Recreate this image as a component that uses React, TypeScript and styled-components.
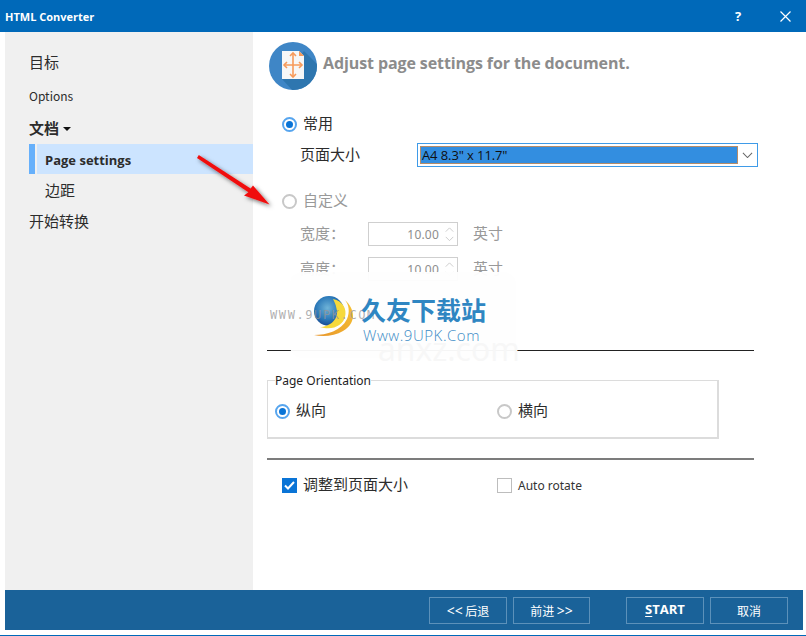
import styled, { createGlobalStyle } from 'styled-components';

const GlobalStyle = createGlobalStyle`
  html, body {
    margin: 0;
    padding: 0;
    background: #fff;
  }
  body {
    font-family: "Noto Sans", "Noto Sans CJK SC", sans-serif;
    color: #2c2c2c;
  }
`;

const cjk = `"Noto Sans CJK SC", "Noto Sans", sans-serif`;

const Window = styled.div`
  position: relative;
  width: 806px;
  height: 636px;
  display: flex;
  flex-direction: column;
  overflow: hidden;
  background: #fff;
  border-bottom: 1px solid #0069b9;
  box-sizing: border-box;
`;

const TitleBar = styled.div`
  height: 32px;
  flex: none;
  display: flex;
  align-items: center;
  padding: 0 15px 0 5px;
  background: #0069b9;
  color: #fff;
`;

const AppName = styled.div`
  flex: 1;
  font: 700 11px "Open Sans", sans-serif;
`;

const HelpMark = styled.div`
  width: 8px;
  margin-right: 37px;
  font: 700 13px "Open Sans", sans-serif;
`;

const Body = styled.div`
  flex: 1;
  display: flex;
  padding-left: 5px;
  min-height: 0;
`;

const Sidebar = styled.nav`
  width: 248px;
  flex: none;
  padding-top: 18px;
  box-sizing: border-box;
  background: #f0f0f0;
  display: flex;
  flex-direction: column;
`;

const NavItem = styled.div<{ $h: number; $bold?: boolean; $small?: boolean; $after?: number }>`
  height: ${p => p.$h}px;
  margin-bottom: ${p => p.$after ?? 0}px;
  display: flex;
  align-items: center;
  padding-left: 24px;
  font-family: ${cjk};
  font-size: ${p => (p.$small ? 12 : 15)}px;
  font-weight: ${p => (p.$bold ? 700 : 400)};
  color: #2c2c2c;
`;

const Caret = styled.span`
  width: 0;
  height: 0;
  margin: 3px 0 0 4px;
  border: 4px solid transparent;
  border-top: 4px solid #111;
  border-bottom: 0;
`;

const NavChild = styled.div<{ $active?: boolean }>`
  height: ${p => (p.$active ? 30 : 31)}px;
  box-sizing: border-box;
  margin-left: 24px;
  display: flex;
  align-items: center;
  padding: ${p => (p.$active ? '1px' : '0')} 0 0 10px;
  border-left: 6px solid ${p => (p.$active ? '#66b0fb' : 'transparent')};
  background: ${p => (p.$active ? '#cce4ff' : 'transparent')};
  background-clip: padding-box;
  font-size: ${p => (p.$active ? 13 : 15)}px;
  font-weight: ${p => (p.$active ? 700 : 400)};
  font-family: ${p => (p.$active ? '"Open Sans", sans-serif' : cjk)};
  color: #2c2c2c;
  position: relative;
  &::before {
    content: '';
    display: ${p => (p.$active ? 'block' : 'none')};
    position: absolute;
    left: 0;
    top: 0;
    bottom: 0;
    width: 2px;
    background: #f0f0f0;
  }
`;

const Content = styled.main`
  flex: 1;
  padding: 10px 52px 0 14px;
  display: flex;
  flex-direction: column;
  min-width: 0;
`;

const Header = styled.header`
  height: 48px;
  display: flex;
  align-items: center;
  gap: 6px;
  padding-left: 2px;
`;

const HeaderTitle = styled.h1`
  margin: 0 0 7px;
  font: 700 16px "Open Sans", sans-serif;
  letter-spacing: -0.1px;
  color: #8c8c8c;
`;

const Row = styled.div<{ $top: number; $left: number; $muted?: boolean }>`
  height: 24px;
  margin-top: ${p => p.$top}px;
  padding-left: ${p => p.$left}px;
  display: flex;
  align-items: center;
  font-family: ${cjk};
  font-size: 15px;
  color: ${p => (p.$muted ? '#999' : '#2c2c2c')};
`;

const Caption = styled.span<{ $w?: number }>`
  ${p => (p.$w ? `width: ${p.$w}px; flex: none;` : '')}
  margin-bottom: 3px;
`;

const RadioMark = styled.span<{ $on?: boolean }>`
  width: 15px;
  height: 15px;
  flex: none;
  box-sizing: border-box;
  border-radius: 50%;
  border: ${p => (p.$on ? '2px solid #57a5ee' : '2px solid #c8c8c8')};
  background: #fff;
  display: flex;
  align-items: center;
  justify-content: center;
  margin-right: 6px;
  &::after {
    content: '';
    display: ${p => (p.$on ? 'block' : 'none')};
    width: 7px;
    height: 7px;
    border-radius: 50%;
    background: #0a74d6;
  }
`;

const SelectBox = styled.div`
  width: 341px;
  height: 24px;
  flex: none;
  box-sizing: border-box;
  border: 1px solid #3f9be8;
  padding: 2px;
  display: flex;
  align-items: stretch;
  background: #fff;
`;

const SelectValue = styled.div`
  flex: 1;
  background: #338ee0;
  border: 1px solid #b58c6a;
  color: #101010;
  font: 400 13px/16px "Open Sans", sans-serif;
  letter-spacing: -0.1px;
  padding-left: 1px;
`;

const SelectArrow = styled.div`
  width: 15px;
  padding-left: 2px;
  flex: none;
  display: flex;
  align-items: center;
  justify-content: center;
`;

const Spinner = styled.div`
  width: 90px;
  height: 24px;
  box-sizing: border-box;
  border: 1px solid #cfcfcf;
  display: flex;
  align-items: center;
  justify-content: flex-end;
  margin-right: 15px;
  font: 400 12px "Noto Sans", sans-serif;
  letter-spacing: 0.2px;
  color: #8d8d8d;
`;

const SpinArrows = styled.div`
  width: 15px;
  margin-left: 3px;
  display: flex;
  flex-direction: column;
  align-items: center;
  gap: 4px;
`;

const ChevronGlyph = styled.svg`
  display: block;
`;

const Divider = styled.div<{ $top: number; $grey?: boolean }>`
  height: ${p => (p.$grey ? 2 : 1)}px;
  margin-top: ${p => p.$top}px;
  background: ${p => (p.$grey ? '#7c7c7c' : '#222')};
`;

const GroupBox = styled.fieldset`
  width: 452px;
  height: 66px;
  margin: 22px 0 0;
  padding: 0 0 0 7px;
  box-sizing: border-box;
  border: 1px solid #dcdcdc;
  border-width: 1px 2px 2px 1px;
`;

const GroupLegend = styled.legend`
  padding: 0;
  height: 14px;
  font: 400 12px/16px "Noto Sans", sans-serif;
  color: #222;
`;

const GroupRow = styled.div`
  display: flex;
  align-items: center;
  height: 24px;
  margin-top: 12px;
  font-family: ${cjk};
  font-size: 15px;
  color: #2c2c2c;
`;

const GroupOption = styled.label<{ $w: number }>`
  width: ${p => p.$w}px;
  display: flex;
  align-items: center;
`;

const CheckMark = styled.span<{ $on?: boolean }>`
  width: 15px;
  height: 15px;
  flex: none;
  box-sizing: border-box;
  margin-right: 6px;
  border: ${p => (p.$on ? '0' : '1px solid #bdbdbd')};
  background: ${p => (p.$on ? '#0a74d6' : '#fff')};
  display: flex;
  align-items: center;
  justify-content: center;
`;

const CheckOption = styled.div<{ $w: number }>`
  width: ${p => p.$w}px;
  display: flex;
  align-items: center;
`;

const SmallText = styled.span`
  font: 400 12px "Noto Sans", sans-serif;
  color: #333;
`;

const Footer = styled.footer`
  height: 40px;
  flex: none;
  margin: 0 3px 5px 5px;
  padding-right: 15px;
  background: #1a6299;
  display: flex;
  align-items: center;
  justify-content: flex-end;
`;

const FooterButton = styled.button<{ $gap?: number; $strong?: boolean; $w?: number }>`
  width: ${p => p.$w ?? 78}px;
  height: 27px;
  margin-left: ${p => p.$gap ?? 6}px;
  padding: 0 0 ${p => (p.$strong ? 3 : 0)}px;
  background: transparent;
  border: 1px solid #5c91ba;
  color: #fff;
  font-family: ${p => (p.$strong ? '"Open Sans", sans-serif' : cjk)};
  font-size: ${p => (p.$strong ? 13 : 12)}px;
  font-weight: ${p => (p.$strong ? 700 : 400)};
  u { text-underline-offset: 2px; }
`;

const Angles = styled.span`
  font: 400 14px "Noto Sans", sans-serif;
`;

const ArrowOverlay = styled.svg`
  position: absolute;
  left: 190px;
  top: 150px;
  pointer-events: none;
`;

const Watermark = styled.div`
  position: absolute;
  left: 267px;
  top: 272px;
  width: 250px;
  height: 86px;
  pointer-events: none;
`;

const WatermarkFade = styled.div`
  position: absolute;
  left: 23px;
  top: 0;
  width: 226px;
  height: 86px;
  border-radius: 12px;
  background: rgba(254, 254, 254, 0.96);
`;

const WatermarkGlobe = styled.svg`
  position: absolute;
  left: 46px;
  top: 23px;
`;

const WatermarkName = styled.div`
  position: absolute;
  left: 94px;
  top: 22px;
  font: 700 25px/30px ${cjk};
  color: #2f86c2;
  white-space: nowrap;
`;

const WatermarkUrl = styled.div`
  position: absolute;
  left: 96px;
  top: 55px;
  font: 300 15px/16px "Open Sans", sans-serif;
  letter-spacing: 0.55px;
  color: #3c8cc6;
  white-space: nowrap;
`;

const WatermarkGhost = styled.div`
  position: absolute;
  left: 3px;
  top: 35px;
  font: 400 12px/16px "DejaVu Sans Mono", monospace;
  letter-spacing: 1.6px;
  color: rgba(150, 150, 150, 0.75);
  white-space: nowrap;
`;

const WatermarkFaint = styled.div`
  position: absolute;
  left: 111px;
  top: 71px;
  font: 400 32px/12px "Open Sans", sans-serif;
  color: #f7f7f7;
  white-space: nowrap;
`;

function PageIcon() {
  return (
    <svg width="48" height="48" viewBox="0 0 48 48">
      <defs>
        <clipPath id="disc">
          <circle cx="24" cy="24" r="24" />
        </clipPath>
      </defs>
      <circle cx="24" cy="24" r="24" fill="#3f86c6" />
      <path d="M13 37 L35 9 L62 36 L36 62 Z" fill="#2e76af" clipPath="url(#disc)" />
      <path d="M13 9 H30 L35 14 V37 H13 Z" fill="#f7f7f7" />
      <path d="M30 9 L35 14 H30 Z" fill="#f79a5a" />
      <g stroke="#f79a5a" strokeWidth="1.6" fill="none">
        <path d="M24 11 V35 M15 23 H33" />
        <path d="M21 14 L24 11 L27 14 M21 32 L24 35 L27 32 M18 20 L15 23 L18 26 M30 20 L33 23 L30 26" />
      </g>
    </svg>
  );
}

function Chevron({ up, size, color }: { up?: boolean; size: number; color: string }) {
  return (
    <ChevronGlyph width={size} height={size / 2 + 1} viewBox="0 0 12 7">
      <path d={up ? 'M1 6 L6 1 L11 6' : 'M1 1 L6 6 L11 1'} stroke={color} strokeWidth="1.1" fill="none" />
    </ChevronGlyph>
  );
}

function SpinnerField() {
  return (
    <Spinner>
      10.00
      <SpinArrows>
        <Chevron up size={9} color="#c4c4c4" />
        <Chevron size={9} color="#c4c4c4" />
      </SpinArrows>
    </Spinner>
  );
}

export default function App() {
  return (
    <Window>
      <GlobalStyle />
      <TitleBar>
        <AppName>HTML Converter</AppName>
        <HelpMark>?</HelpMark>
        <svg width="11" height="11" viewBox="0 0 11 11">
          <path d="M0.5 0.5 L10.5 10.5 M10.5 0.5 L0.5 10.5" stroke="#fff" strokeWidth="1.2" />
        </svg>
      </TitleBar>
      <Body>
        <Sidebar>
          <NavItem $h={22}>目标</NavItem>
          <NavItem $h={46} $small>Options</NavItem>
          <NavItem $h={18} $bold $after={8}>文档<Caret /></NavItem>
          <NavChild $active>Page settings</NavChild>
          <NavChild>边距</NavChild>
          <NavItem $h={31}>开始转换</NavItem>
        </Sidebar>
        <Content>
          <Header>
            <PageIcon />
            <HeaderTitle>Adjust page settings for the document.</HeaderTitle>
          </Header>
          <Row $top={22} $left={15}><RadioMark $on /><Caption>常用</Caption></Row>
          <Row $top={7} $left={33}>
            <Caption $w={117}>页面大小</Caption>
            <SelectBox>
              <SelectValue>A4 8.3" x 11.7"</SelectValue>
              <SelectArrow><Chevron size={11} color="#666" /></SelectArrow>
            </SelectBox>
          </Row>
          <Row $top={22} $left={15} $muted><RadioMark /><Caption>自定义</Caption></Row>
          <Row $top={9} $left={33} $muted>
            <Caption $w={68}>宽度：</Caption>
            <SpinnerField />
            <Caption>英寸</Caption>
          </Row>
          <Row $top={11} $left={33} $muted>
            <Caption $w={68}>高度：</Caption>
            <SpinnerField />
            <Caption>英寸</Caption>
          </Row>
          <Divider $top={69} />
          <GroupBox>
            <GroupLegend>Page Orientation</GroupLegend>
            <GroupRow>
              <GroupOption $w={222}><RadioMark $on /><Caption>纵向</Caption></GroupOption>
              <GroupOption $w={100}><RadioMark /><Caption>横向</Caption></GroupOption>
            </GroupRow>
          </GroupBox>
          <Divider $top={19} $grey />
          <Row $top={13} $left={15}>
            <CheckOption $w={215}>
              <CheckMark $on>
                <svg width="11" height="9" viewBox="0 0 11 9">
                  <path d="M1 4.5 L4 7.5 L10 1" stroke="#fff" strokeWidth="2" fill="none" />
                </svg>
              </CheckMark>
              <Caption>调整到页面大小</Caption>
            </CheckOption>
            <CheckOption $w={120}>
              <CheckMark />
              <SmallText>Auto rotate</SmallText>
            </CheckOption>
          </Row>
        </Content>
      </Body>
      <Footer>
        <FooterButton><Angles>&lt;&lt;</Angles> 后退</FooterButton>
        <FooterButton $w={77}>前进 <Angles>&gt;&gt;</Angles></FooterButton>
        <FooterButton $gap={36} $strong><u>S</u>TART</FooterButton>
        <FooterButton>取消</FooterButton>
      </Footer>
      <ArrowOverlay width="90" height="65" viewBox="190 150 90 65">
        <defs>
          <filter id="arrowShadow" x="-20%" y="-20%" width="140%" height="140%">
            <feDropShadow dx="2" dy="2" stdDeviation="2" floodColor="#000" floodOpacity="0.55" />
          </filter>
        </defs>
        <path
          d="M198.8 155 L250.6 188.6 L253 185.5 L269.5 204.5 L244 195.5 L248.4 192.2 L197 158 Z"
          fill="#f01010"
          filter="url(#arrowShadow)"
        />
      </ArrowOverlay>
      <Watermark>
        <WatermarkFade />
        <WatermarkFaint>anxz.com</WatermarkFaint>
        <WatermarkGlobe width="44" height="46" viewBox="0 0 44 46">
          <defs>
            <radialGradient id="globe" cx="0.45" cy="0.4" r="0.65">
              <stop offset="0" stopColor="#6fb4d8" />
              <stop offset="0.6" stopColor="#2a78b8" />
              <stop offset="1" stopColor="#143f88" />
            </radialGradient>
            <linearGradient id="swoosh" x1="1" y1="0" x2="0" y2="1">
              <stop offset="0" stopColor="#f6c433" />
              <stop offset="1" stopColor="#e8952a" />
            </linearGradient>
          </defs>
          <circle cx="16" cy="16" r="15" fill="url(#globe)" />
          <path d="M20 4 C30 6 34 14 32 22 C30 30 20 36 7 32 C16 32 25 25 24 16 C23 10 22 8 20 4 Z" fill="#f6d93c" />
          <path d="M32 5 C42 14 44 28 30 36 C22 41 10 42 1 40 C14 40 28 36 34 24 C37 17 36 10 32 5 Z" fill="url(#swoosh)" />
        </WatermarkGlobe>
        <WatermarkGhost>WWW.9UPK.COM</WatermarkGhost>
        <WatermarkName>久友下载站</WatermarkName>
        <WatermarkUrl>Www.9UPK.Com</WatermarkUrl>
      </Watermark>
    </Window>
  );
}
